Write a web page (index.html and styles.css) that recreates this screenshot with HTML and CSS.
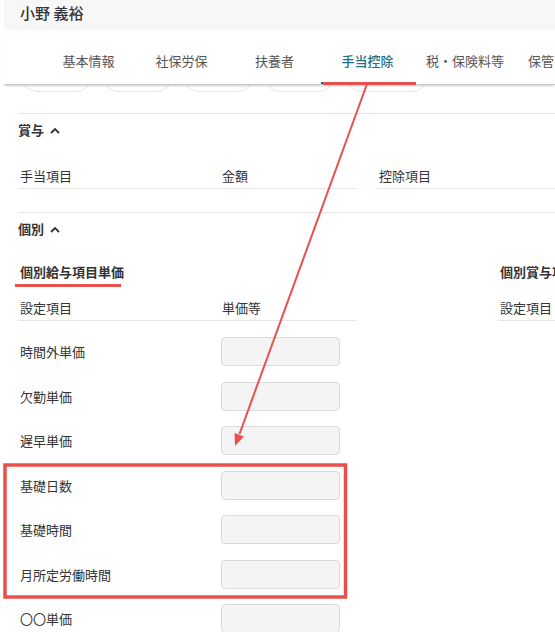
FILE: index.html
```html
<!DOCTYPE html>
<html lang="ja">
<head>
    <meta charset="UTF-8">
    <meta name="viewport" content="width=device-width, initial-scale=1.0">
    <title>従業員情報 - 手当控除</title>
    <link rel="stylesheet" href="styles.css">
</head>
<body>
<div class="page">
    <header class="emp-header">小野 義裕</header>

    <nav class="tabs">
        <a class="tab">基本情報</a>
        <a class="tab">社保労保</a>
        <a class="tab">扶養者</a>
        <a class="tab active">手当控除</a>
        <a class="tab">税・保険料等</a>
        <a class="tab last">保管書類</a>
    </nav>

    <!-- ボタン列（タブの下にスクロールで隠れている部分） -->
    <div class="pill-row">
        <span class="pill"></span>
        <span class="pill"></span>
        <span class="pill"></span>
        <span class="pill"></span>
        <span class="pill wide"></span>
    </div>

    <main class="content">
        <section class="block">
            <h3 class="block-title">賞与
                <svg class="chev" width="10" height="7" viewBox="0 0 10 7"><path d="M1 6 L5 2 L9 6" fill="none" stroke="#333" stroke-width="1.8"/></svg>
            </h3>
            <div class="bonus-grid">
                <div class="table-head"><span>手当項目</span><span>金額</span></div>
                <div class="table-head"><span>控除項目</span><span>金額</span></div>
            </div>
        </section>

        <section class="block">
            <h3 class="block-title">個別
                <svg class="chev" width="10" height="7" viewBox="0 0 10 7"><path d="M1 6 L5 2 L9 6" fill="none" stroke="#333" stroke-width="1.8"/></svg>
            </h3>
            <div class="unit-grid">
                <div class="unit-col">
                    <h4 class="sub-title">個別給与項目単価</h4>
                    <div class="table-head"><span>設定項目</span><span>単価等</span></div>
                    <div class="unit-rows">
                        <div class="unit-row"><span>時間外単価</span><input class="unit-input" type="text"></div>
                        <div class="unit-row"><span>欠勤単価</span><input class="unit-input" type="text"></div>
                        <div class="unit-row"><span>遅早単価</span><input class="unit-input" type="text"></div>
                        <div class="unit-row"><span>基礎日数</span><input class="unit-input" type="text"></div>
                        <div class="unit-row"><span>基礎時間</span><input class="unit-input" type="text"></div>
                        <div class="unit-row"><span>月所定労働時間</span><input class="unit-input" type="text"></div>
                        <div class="unit-row"><span>〇〇単価</span><input class="unit-input" type="text"></div>
                    </div>
                </div>
                <div class="unit-col">
                    <h4 class="sub-title">個別賞与項目単価</h4>
                    <div class="table-head"><span>設定項目</span><span>単価等</span></div>
                </div>
            </div>
        </section>
    </main>

    <!-- 注釈（赤線・枠・矢印） -->
    <svg class="notes" width="555" height="632" viewBox="0 0 555 632">
        <rect x="323" y="82" width="93" height="3" fill="#e8514b"/>
        <rect x="15" y="284" width="106" height="3" fill="#e8514b"/>
        <rect x="5" y="465" width="340.5" height="132" fill="none" stroke="#e8514b" stroke-width="3.5"/>
        <line x1="367" y1="84" x2="239.5" y2="434" stroke="#e8514b" stroke-width="2"/>
        <polygon points="235,446 244,436.5 234.5,433" fill="#e8514b"/>
    </svg>
</div>
</body>
</html>
```

FILE: styles.css
```css
body {
    margin: 0;
    overflow: hidden;
    font-family: "Noto Sans CJK JP", sans-serif;
    font-size: 13px;
    color: #333;
    background: #fff;
}
.page {
    position: relative;
    width: 555px;
    height: 632px;
    overflow: hidden;
    padding-left: 4px;
    box-sizing: border-box;
}
.emp-header {
    height: 30px;
    box-sizing: border-box;
    padding: 2px 0 0 16px;
    line-height: 22px;
    font-size: 15px;
    font-weight: 500;
    background: #f7f7f7;
    white-space: nowrap;
}
.tabs {
    position: relative;
    z-index: 2;
    display: flex;
    height: 55px;
    box-sizing: border-box;
    padding-left: 38px;
    background: #fff;
    border-bottom: 1px solid #c8c8c8;
    box-shadow: 0 2px 2px -1px rgba(0, 0, 0, 0.2);
    white-space: nowrap;
}
.tab {
    flex: none;
    min-width: 93px;
    box-sizing: border-box;
    padding: 20px 12px 0;
    line-height: 22px;
    text-align: center;
    color: #555;
    border-bottom: 2px solid transparent;
}
.tab.last {
    min-width: 0;
}
.tab.active {
    color: #23707f;
    font-weight: 500;
    border-bottom-color: #1f6676;
}
.pill-row {
    display: flex;
    align-items: flex-end;
    gap: 12px;
    height: 7px;
    overflow: hidden;
    padding-left: 18px;
}
.pill {
    flex: none;
    width: 69px;
    height: 30px;
    border: 1px solid #e6e6e6;
    border-radius: 15px;
    box-sizing: border-box;
}
.pill.wide {
    width: 81px;
}
.content {
    width: 900px;
    padding: 21px 0 0 14px;
}
.block {
    border-top: 1px solid #e6e6e6;
    padding-top: 6px;
    margin-bottom: 23px;
}
.block-title {
    display: flex;
    align-items: center;
    margin: 0;
    line-height: 20px;
    font-size: 13px;
    font-weight: 700;
}
.chev {
    margin-left: 6px;
}
.bonus-grid {
    display: grid;
    grid-template-columns: 338px 1fr;
    column-gap: 21px;
    margin-top: 25px;
}
.table-head {
    display: grid;
    grid-template-columns: 202px 1fr;
    padding: 0 0 1px 2px;
    line-height: 22px;
    border-bottom: 1px solid #e6e6e6;
}
.unit-grid {
    display: grid;
    grid-template-columns: 339px 339px;
    column-gap: 141px;
    margin-top: 23px;
}
.sub-title {
    margin: 0 0 15px;
    padding-left: 2px;
    line-height: 20px;
    font-size: 13px;
    font-weight: 700;
    white-space: nowrap;
}
.unit-rows {
    display: flex;
    flex-direction: column;
    gap: 15.5px;
    margin-top: 16px;
}
.unit-row {
    display: grid;
    grid-template-columns: 201px 119px;
    align-items: center;
    padding-left: 2px;
}
.unit-input {
    height: 29px;
    box-sizing: border-box;
    margin: 0;
    border: 1px solid #dadada;
    border-radius: 4px;
    background: #f4f4f4;
}
.notes {
    position: absolute;
    left: 0;
    top: 0;
    z-index: 3;
    pointer-events: none;
}
```
